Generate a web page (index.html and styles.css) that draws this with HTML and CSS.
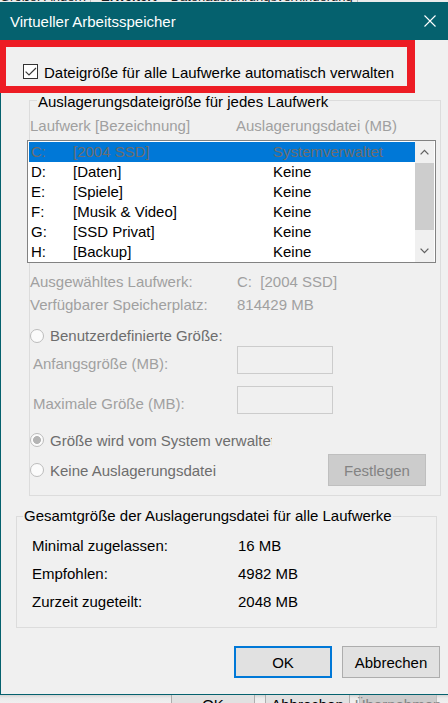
FILE: index.html
```html
<!DOCTYPE html>
<html lang="de">
<head>
<meta charset="utf-8">
<title>Virtueller Arbeitsspeicher</title>
<link rel="stylesheet" href="styles.css">
</head>
<body>
<div class="behind-top">
  <div class="behind-text"><span class="bt1">Größe: Ändern</span><span class="bt-sep"></span><span class="bt2">Erweitert</span><span class="bt3">Datenausführungsverhinderung</span><span class="bt-sep"></span></div>
</div>
<div class="dialog">
  <div class="titlebar">
    <span class="title">Virtueller Arbeitsspeicher</span>
    <svg class="close" width="12" height="12" viewBox="0 0 12 12"><path d="M0.5 0.5 L11.5 11.5 M11.5 0.5 L0.5 11.5" stroke="#ffffff" stroke-width="1.1" fill="none"/></svg>
  </div>
  <div class="dlg-body">
    <div class="highlight">
      <div class="check-row">
        <span class="cbox"><svg width="13" height="13" viewBox="0 0 13 13"><polyline points="1.6,6.6 5,10 12,3" fill="none" stroke="#3a3a3a" stroke-width="1.2"/></svg></span>
        <span class="check-label">Dateigröße für alle Laufwerke automatisch verwalten</span>
      </div>
    </div>

    <div class="group g1">
      <div class="legend">Auslagerungsdateigröße für jedes Laufwerk</div>
      <div class="colhead"><span class="ch1">Laufwerk [Bezeichnung]</span><span>Auslagerungsdatei (MB)</span></div>
      <div class="listbox">
        <div class="rows">
          <div class="row sel"><span class="c1">C:</span><span class="c2">[2004 SSD]</span><span>Systemverwaltet</span></div>
          <div class="row"><span class="c1">D:</span><span class="c2">[Daten]</span><span>Keine</span></div>
          <div class="row"><span class="c1">E:</span><span class="c2">[Spiele]</span><span>Keine</span></div>
          <div class="row"><span class="c1">F:</span><span class="c2">[Musik &amp; Video]</span><span>Keine</span></div>
          <div class="row"><span class="c1">G:</span><span class="c2">[SSD Privat]</span><span>Keine</span></div>
          <div class="row"><span class="c1">H:</span><span class="c2">[Backup]</span><span>Keine</span></div>
        </div>
        <div class="scrollbar">
          <div class="sb-btn sb-up"><svg width="9" height="6" viewBox="0 0 9 6"><polyline points="0.6,5.4 4.5,1.4 8.4,5.4" fill="none" stroke="#606060" stroke-width="1.3"/></svg></div>
          <div class="sb-thumb"></div>
          <div class="sb-track"></div>
          <div class="sb-btn sb-down"><svg width="9" height="6" viewBox="0 0 9 6"><polyline points="0.6,0.6 4.5,4.6 8.4,0.6" fill="none" stroke="#606060" stroke-width="1.3"/></svg></div>
        </div>
      </div>
      <div class="info">
        <div class="info-row"><span class="ic1">Ausgewähltes Laufwerk:</span><span>C:&nbsp; [2004 SSD]</span></div>
        <div class="info-row"><span class="ic1">Verfügbarer Speicherplatz:</span><span>814429 MB</span></div>
      </div>
      <div class="radio-row r1"><span class="radio"></span><span class="rlabel">Benutzerdefinierte Größe:</span></div>
      <div class="field-row"><span class="flabel">Anfangsgröße (MB):</span><span class="input"></span></div>
      <div class="field-row f2"><span class="flabel">Maximale Größe (MB):</span><span class="input"></span></div>
      <div class="radio-row r2"><span class="radio on"></span><span class="rlabel clip">Größe wird vom System verwaltet</span></div>
      <div class="radio-row r3"><span class="radio"></span><span class="rlabel">Keine Auslagerungsdatei</span><span class="btn disabled set">Festlegen</span></div>
    </div>

    <div class="group g2">
      <div class="legend">Gesamtgröße der Auslagerungsdatei für alle Laufwerke</div>
      <div class="totals">
        <div class="tot-row"><span class="tc1">Minimal zugelassen:</span><span>16 MB</span></div>
        <div class="tot-row"><span class="tc1">Empfohlen:</span><span>4982 MB</span></div>
        <div class="tot-row"><span class="tc1">Zurzeit zugeteilt:</span><span>2048 MB</span></div>
      </div>
    </div>

    <div class="actions">
      <span class="btn default">OK</span>
      <span class="btn">Abbrechen</span>
    </div>
  </div>
</div>
<div class="behind-bottom">
  <span class="btn bb1">OK</span>
  <span class="btn bb2">Abbrechen</span>
  <span class="btn disabled bb3">Übernehmen</span>
</div>
</body>
</html>
```
FILE: styles.css
```css
* { box-sizing: border-box; }
html, body { margin: 0; padding: 0; }
body {
  width: 448px;
  height: 703px;
  overflow: hidden;
  background: #f0f0f0;
  font-family: "Liberation Sans", Arial, sans-serif;
  font-size: 15px;
  color: #000;
}

/* window behind, top strip */
.behind-top {
  height: 2px;
  overflow: hidden;
  background: #ececec;
}
.behind-text {
  margin-top: -10px;
  line-height: 14px;
  font-size: 13px;
  white-space: nowrap;
  color: #1e1e1e;
  display: flex;
  align-items: flex-start;
}
.bt1 { margin-right: 4px; }
.bt-sep { width: 1px; height: 14px; background: #bbbbbb; margin-right: 10px; flex: none; }
.bt2 { font-weight: bold; margin-right: 14px; }
.bt3 { margin-right: 4px; }

/* dialog */
.dialog {
  border-left: 1px solid #05616e;
  border-bottom: 1px solid #05616e;
  background: #f0f0f0;
}
.titlebar {
  height: 38px;
  background: #05616e;
  color: #ffffff;
  display: flex;
  align-items: flex-start;
  padding-left: 9px;
}
.title {
  line-height: 38px;
  padding-top: 1px;
}
.close {
  margin-left: auto;
  margin-right: 12px;
  margin-top: 13px;
}

.highlight {
  margin-left: -1px;
  width: 415px;
  height: 53px;
  border-style: solid;
  border-color: #ed1c24;
  border-width: 7px 8px 7px 6px;
  padding: 16px 0 0 17px;
}
.check-row {
  display: flex;
  align-items: center;
  height: 17px;
}
.cbox {
  width: 15px;
  height: 15px;
  border: 1px solid #333333;
  background: #ffffff;
  display: flex;
}
.check-label {
  margin-left: 6px;
  line-height: 17px;
  padding-top: 1px;
}

/* group boxes */
.group {
  border: 1px solid #dcdcdc;
}
.legend {
  width: max-content;
  background: #f0f0f0;
  padding: 0 1px;
  line-height: 18px;
}
.g1 {
  margin: 7px 0 0 28px;
  width: 412px;
  padding-bottom: 9px;
}
.g1 .legend { margin: -8px 0 0 7px; }

.colhead {
  margin-top: 5px;
  line-height: 20px;
  display: flex;
  color: #a0a0a0;
}
.ch1 { width: 206px; }

.listbox {
  margin: 4px 0 0 -3px;
  width: 409px;
  height: 123px;
  border: 1px solid #828282;
  padding: 0 1px;
  background: #ffffff;
  display: flex;
}
.rows {
  width: 386px;
  padding-top: 1px;
}
.row {
  height: 20px;
  line-height: 20px;
  display: flex;
  padding-left: 2px;
  white-space: nowrap;
}
.row.sel {
  background: #0078d7;
  color: #6d6d6d;
}
.c1 { width: 42px; }
.c2 { width: 200px; }

.scrollbar {
  width: 19px;
  background: #f0f0f0;
  display: flex;
  flex-direction: column;
}
.sb-btn {
  display: flex;
  justify-content: center;
}
.sb-up { height: 22px; padding-top: 8px; }
.sb-thumb { height: 67px; background: #cdcdcd; }
.sb-track { height: 11px; }
.sb-down { height: 21px; padding-top: 7px; }

.info {
  margin-top: 7px;
  color: #a0a0a0;
}
.info-row {
  line-height: 23px;
  display: flex;
}
.ic1 { width: 207px; }

.radio-row {
  display: flex;
  align-items: center;
}
.radio {
  width: 14px;
  height: 14px;
  border-radius: 50%;
  border: 1px solid #bcbcbc;
  background: #fbfbfb;
  flex: none;
}
.radio.on {
  background: radial-gradient(circle, #b4b4b4 0, #b4b4b4 3.6px, #fbfbfb 4.3px);
}
.rlabel {
  margin-left: 6px;
  color: #6d6d6d;
  white-space: nowrap;
}
.rlabel.clip {
  max-width: 222px;
  overflow: hidden;
}
.r1 { margin-top: 9px; height: 21px; }
.r2 { margin-top: 16px; height: 20px; }
.r3 { margin-top: 4px; height: 32px; }

.field-row {
  display: flex;
  height: 28px;
}
.f2 { margin-top: 12px; }
.flabel {
  width: 207px;
  padding: 8px 0 0 3px;
  line-height: 20px;
  color: #a0a0a0;
}
.input {
  width: 96px;
  height: 28px;
  border: 1px solid #cccccc;
}

.btn {
  width: 98px;
  height: 32px;
  background: #e1e1e1;
  border: 1px solid #adadad;
  display: flex;
  align-items: center;
  justify-content: center;
  white-space: nowrap;
}
.btn.default {
  border: 2px solid #0078d7;
}
.btn.disabled {
  background: #cccccc;
  border-color: #bfbfbf;
  color: #838383;
}
.set {
  margin-left: auto;
  margin-right: 14px;
}

.g2 {
  margin: 20px 0 0 15px;
  width: 421px;
  padding-bottom: 11px;
}
.g2 .legend { margin: -10px 0 0 6px; }
.totals {
  margin-top: 7px;
  padding-left: 15px;
}
.tot-row {
  line-height: 28px;
  display: flex;
}
.tc1 { width: 206px; }

.actions {
  margin-top: 18px;
  padding: 0 0 16px 233px;
  display: flex;
  gap: 10px;
}

/* window behind, bottom strip */
.behind-bottom {
  height: 8px;
  overflow: hidden;
  display: flex;
  align-items: flex-start;
  padding-left: 171px;
  background: linear-gradient(#d4d4d4, #ebebeb 3px, #f0f0f0);
}
.behind-bottom .btn {
  margin-top: -6px;
  height: 30px;
  flex: none;
}
.bb1 { width: 84px; }
.bb2 { width: 85px; margin-left: 10px; }
.bb3 { width: 78px; margin-left: 9px; }
```
